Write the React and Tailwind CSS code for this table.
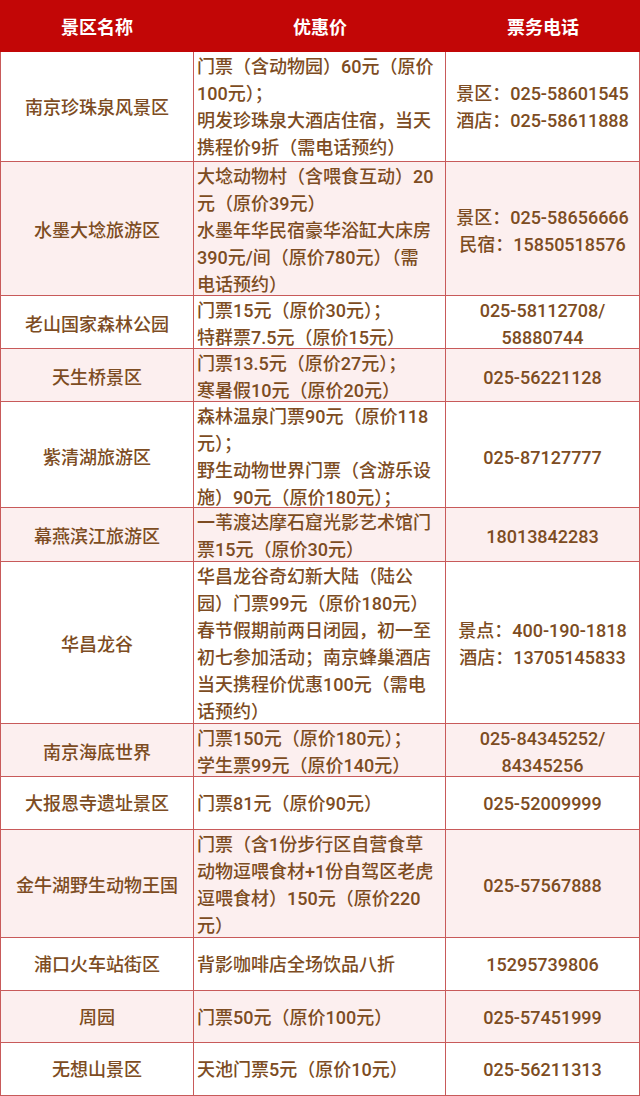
const ROWS = [
  {
    name: '南京珍珠泉风景区',
    h: 110,
    deal: ['门票（含动物园）60元（原价', '100元）；', '明发珍珠泉大酒店住宿，当天', '携程价9折（需电话预约）'],
    phone: ['景区：025-58601545', '酒店：025-58611888'],
  },
  {
    name: '水墨大埝旅游区',
    h: 134,
    deal: ['大埝动物村（含喂食互动）20', '元（原价39元）', '水墨年华民宿豪华浴缸大床房', '390元/间（原价780元）（需', '电话预约）'],
    phone: ['景区：025-58656666', '民宿：15850518576'],
  },
  {
    name: '老山国家森林公园',
    h: 53,
    deal: ['门票15元（原价30元）；', '特群票7.5元（原价15元）'],
    phone: ['025-58112708/', '58880744'],
  },
  {
    name: '天生桥景区',
    h: 53,
    deal: ['门票13.5元（原价27元）；', '寒暑假10元（原价20元）'],
    phone: ['025-56221128'],
  },
  {
    name: '紫清湖旅游区',
    h: 106,
    deal: ['森林温泉门票90元（原价118', '元）；', '野生动物世界门票（含游乐设', '施）90元（原价180元）；'],
    phone: ['025-87127777'],
  },
  {
    name: '幕燕滨江旅游区',
    h: 54,
    deal: ['一苇渡达摩石窟光影艺术馆门', '票15元（原价30元）'],
    phone: ['18013842283'],
  },
  {
    name: '华昌龙谷',
    h: 162,
    deal: ['华昌龙谷奇幻新大陆（陆公', '园）门票99元（原价180元）', '春节假期前两日闭园，初一至', '初七参加活动；南京蜂巢酒店', '当天携程价优惠100元（需电', '话预约）'],
    phone: ['景点：400-190-1818', '酒店：13705145833'],
  },
  {
    name: '南京海底世界',
    h: 53,
    deal: ['门票150元（原价180元）；', '学生票99元（原价140元）'],
    phone: ['025-84345252/', '84345256'],
  },
  {
    name: '大报恩寺遗址景区',
    h: 53,
    deal: ['门票81元（原价90元）'],
    phone: ['025-52009999'],
  },
  {
    name: '金牛湖野生动物王国',
    h: 108,
    deal: ['门票（含1份步行区自营食草', '动物逗喂食材+1份自驾区老虎', '逗喂食材）150元（原价220', '元）'],
    phone: ['025-57567888'],
  },
  {
    name: '浦口火车站街区',
    h: 53,
    deal: ['背影咖啡店全场饮品八折'],
    phone: ['15295739806'],
  },
  {
    name: '周园',
    h: 52,
    deal: ['门票50元（原价100元）'],
    phone: ['025-57451999'],
  },
  {
    name: '无想山景区',
    h: 53,
    deal: ['天池门票5元（原价10元）'],
    phone: ['025-56211313'],
  },
];

function Lines({ items }) {
  return items.map((t, i) => <div key={i}>{t}</div>);
}

export default function App() {
  return (
    <div
      className="w-[640px] bg-white text-[18px] leading-[27px] text-[#7d4c22]"
      style={{ fontFamily: 'Roboto, "Noto Sans CJK SC", sans-serif' }}
    >
      <div className="grid h-[52px] grid-cols-[194px_252px_1fr] bg-[#c20606] pt-[3px] font-bold text-white">
        <div className="flex items-center justify-center">景区名称</div>
        <div className="flex items-center justify-center">优惠价</div>
        <div className="flex items-center justify-center">票务电话</div>
      </div>
      <div className="border-l border-r border-[#c85a5a]">
        {ROWS.map((r, i) => (
          <div
            key={r.name}
            className={`grid grid-cols-[193px_252px_1fr] border-b border-[#c85a5a] font-medium ${i % 2 ? 'bg-[#fcefef]' : 'bg-white'}`}
            style={{ height: r.h }}
          >
            <div className="flex items-center justify-center border-r border-[#c85a5a] pt-[1px]">{r.name}</div>
            <div className="flex flex-col justify-center border-r border-[#c85a5a] pt-[1px] pl-[3px] whitespace-nowrap">
              <Lines items={r.deal} />
            </div>
            <div className="flex flex-col items-center justify-center pt-[1px] whitespace-nowrap">
              <Lines items={r.phone} />
            </div>
          </div>
        ))}
      </div>
    </div>
  );
}
